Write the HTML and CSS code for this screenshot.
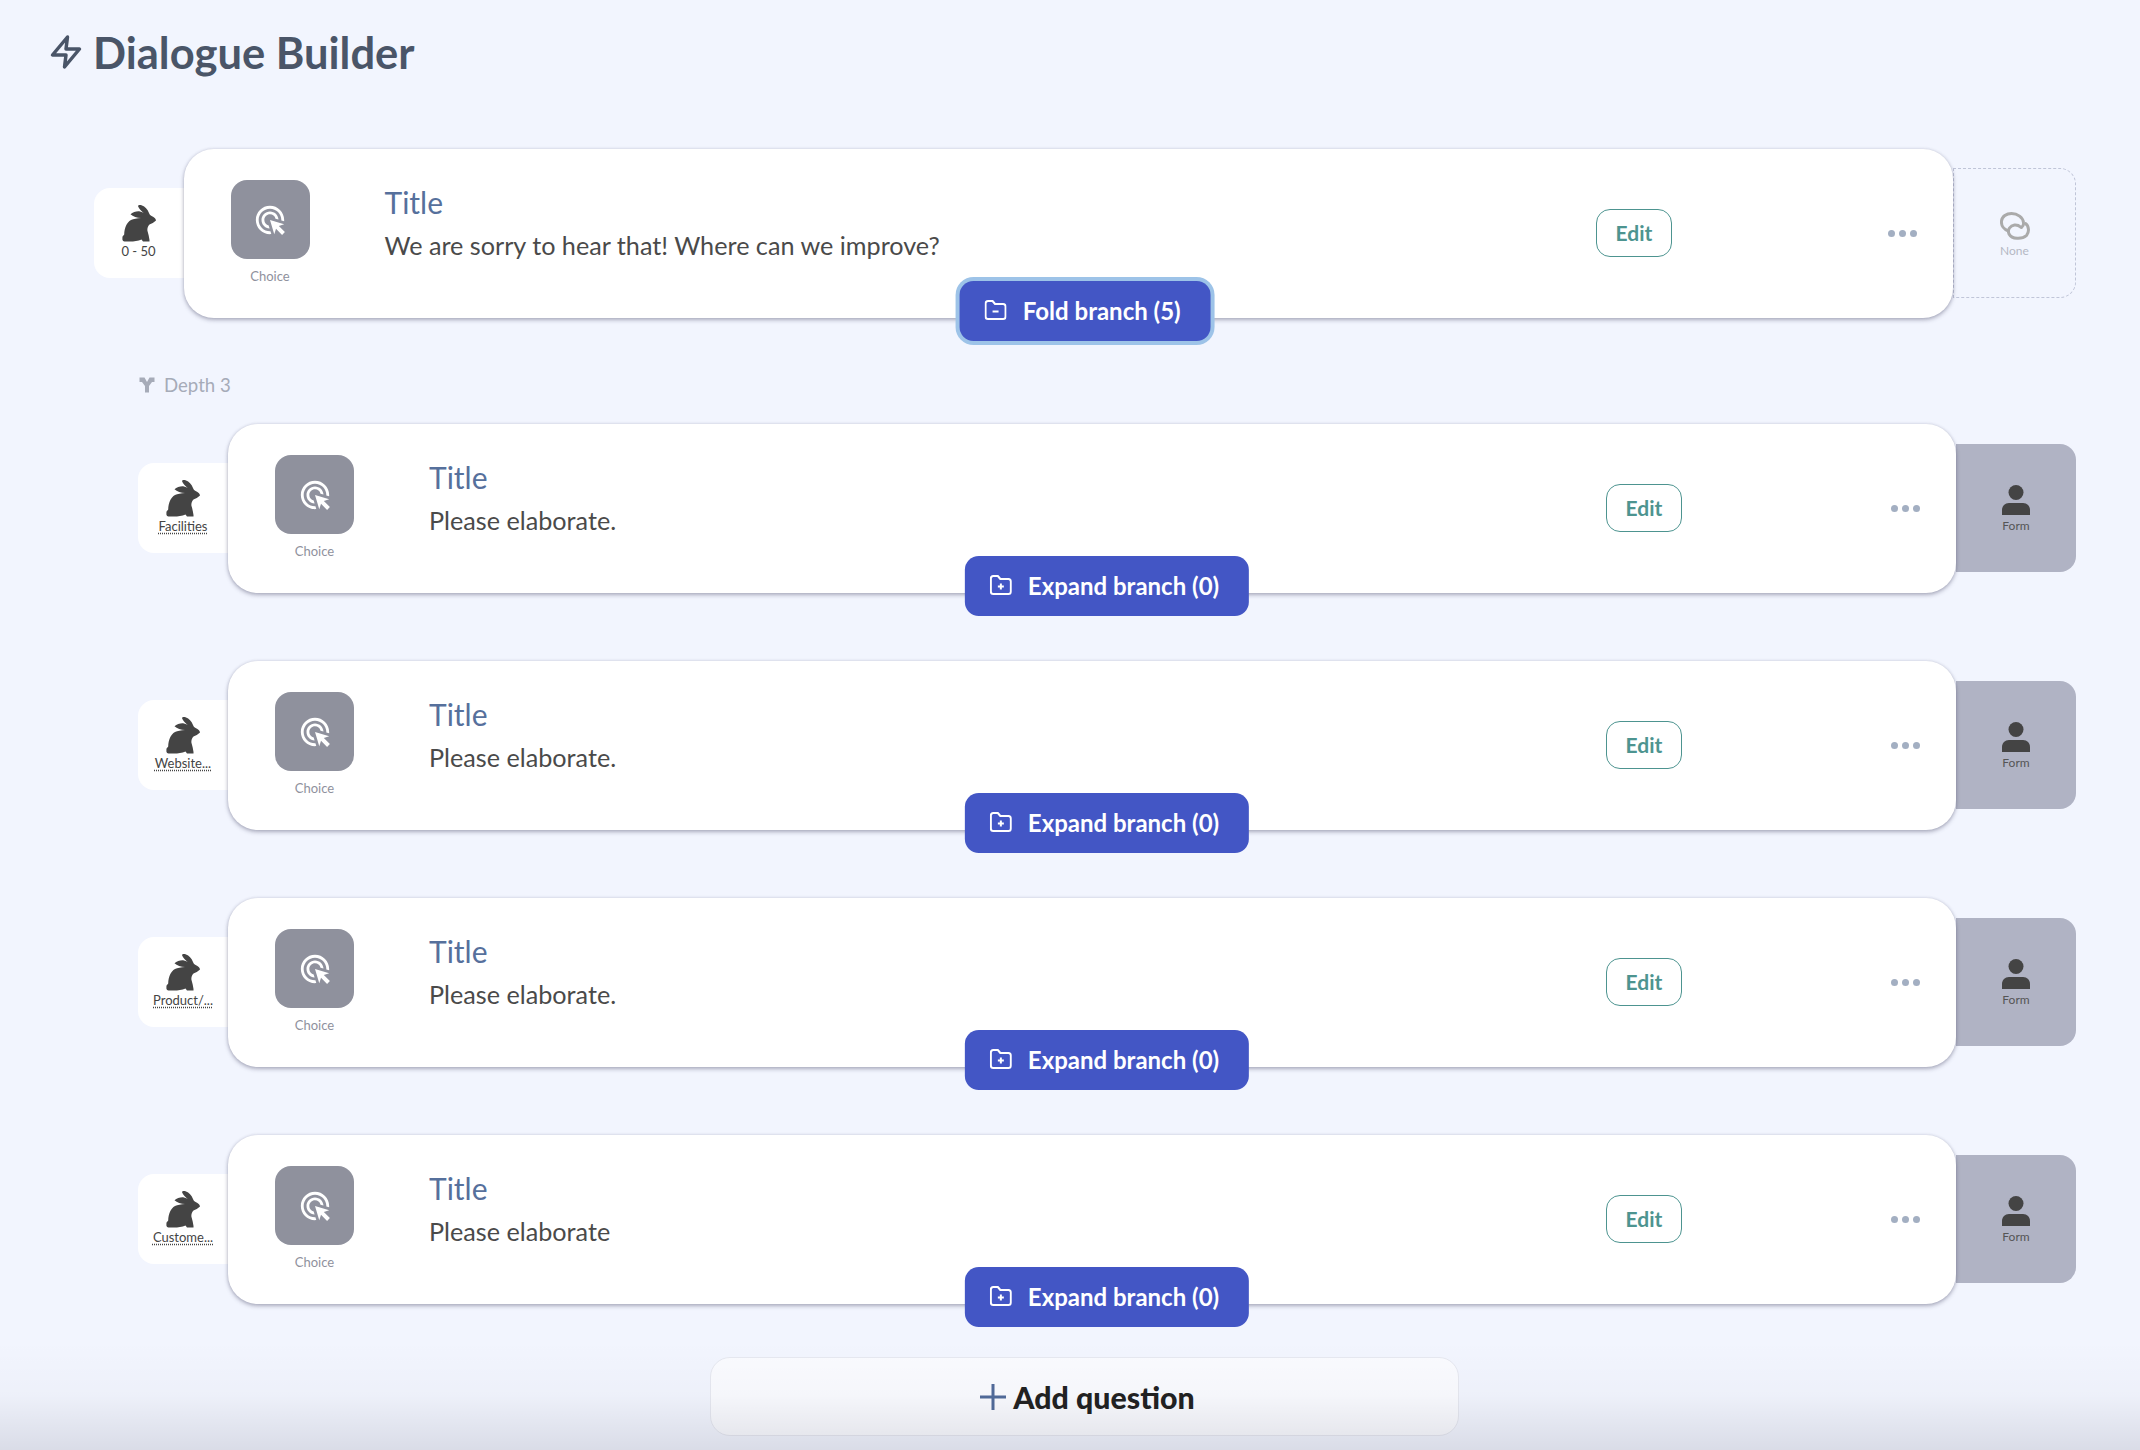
FILE: index.html
```html
<!DOCTYPE html>
<html lang="en">
<head>
    <meta charset="UTF-8">
    <meta name="viewport" content="width=device-width, initial-scale=1.0">
    <title>Dialogue Builder</title>
    <link rel="stylesheet" href="styles.css">
</head>
<body>
    <svg class="icon-defs" width="0" height="0">
        <defs>
            <path id="rabbit" d="M0.5 33C0 31.500 1.500 30.500 2.200 29.500C2.500 23 4.500 17.500 9 15C11.500 13.800 15 13.300 19 13C15 13 11 11.500 8.500 9.300C11 7 15 6 18 6.500C19.500 6.800 21 7.500 22.500 8.500C19.500 6.500 16.500 3 16 1C16.500 -0.200 18.500 -0.200 20 0.500C23 1.500 25.500 4 27 8C27.500 10 29 10.800 31 11.800C32.500 12.500 33.800 14 34 15.500C32 17.500 29.500 18.500 27.500 19.500C26 21 25 23.500 25.500 26C26.500 29 27 32 27.500 35L27.500 36.500L21 36.500L19.500 34.500C16 36 12 36.500 8 36.500L2.500 36.500C1 36.500 0 35 0.500 33Z"/>
            <path id="click" d="M11.71 17.99C8.53 17.84 6 15.22 6 12c0-3.31 2.69-6 6-6 3.22 0 5.84 2.53 5.99 5.71l-2.1-.63C15.48 9.31 13.89 8 12 8c-2.21 0-4 1.79-4 4 0 1.89 1.31 3.48 3.08 3.89l.63 2.1zM22 12c0 .3-.01.6-.04.9l-1.97-.59c.01-.1.01-.21.01-.31 0-4.42-3.58-8-8-8s-8 3.58-8 8 3.58 8 8 8c.1 0 .21 0 .31-.01l.59 1.97c-.3.03-.6.04-.9.04-5.52 0-10-4.48-10-10S6.48 2 12 2s10 4.48 10 10zm-3.77 4.26L22 15l-10-3 3 10 1.26-3.77 4.27 4.27 1.98-1.98-4.28-4.26z"/>
            <path id="folder" d="M1 3.500C1 2.100 2.100 1 3.500 1H8L10.500 4H18.500C19.900 4 21 5.100 21 6.500V16.500C21 17.900 19.900 19 18.500 19H3.500C2.100 19 1 17.900 1 16.500Z"/>
        </defs>
    </svg>

    <h1 class="page-title">
        <svg class="bolt" viewBox="0 0 24 24"><polygon points="13 2 3 14 12 14 11 22 21 10 12 10 13 2"/></svg>
        Dialogue Builder
    </h1>

    <div class="row row-top">
        <div class="tab-left">
            <svg class="rabbit" viewBox="0 0 34 37"><use href="#rabbit"/></svg>
            <span class="tab-label-plain">0 - 50</span>
        </div>
        <div class="card">
            <div class="type-col">
                <div class="type-icon"><svg viewBox="0 0 24 24"><use href="#click"/></svg></div>
                <span class="type-label">Choice</span>
            </div>
            <div class="card-text">
                <div class="card-title">Title</div>
                <div class="card-body">We are sorry to hear that! Where can we improve?</div>
            </div>
            <button class="edit-btn">Edit</button>
            <div class="dots"><i></i><i></i><i></i></div>
            <button class="branch-btn branch-active">
                <svg class="folder" viewBox="0 0 22 20"><use href="#folder"/><path d="M8 11.500H14"/></svg>
                Fold branch (5)
            </button>
        </div>
        <div class="tab-right tab-none">
            <svg class="link" viewBox="0 0 30 28"><path d="M8.500 19C4 17.500 1 13.500 1.500 9C2 4.500 6.500 1.500 11.500 1.500C17.500 1.500 23 5.500 23.500 10.500C23.800 12.500 23 14.500 21.500 15.500"/><path d="M25.500 11.500C29 14 29.500 20 26.500 23.500C22 27.500 12 27.500 9 22C7 17.500 10.500 13.500 14.500 13C17 12.800 19 13.500 20.500 15"/></svg>
            <span>None</span>
        </div>
    </div>

    <div class="depth">
        <svg viewBox="0 0 16 16"><path d="M0.500 0.500H5.500L8 5L10.500 0.500H15.500V5H13L10 9V15.500H6V9L3 5H0.500Z"/></svg>
        Depth 3
    </div>

    <div class="row">
        <div class="tab-left">
            <svg class="rabbit" viewBox="0 0 34 37"><use href="#rabbit"/></svg>
            <span class="tab-label">Facilities</span>
        </div>
        <div class="card">
            <div class="type-col">
                <div class="type-icon"><svg viewBox="0 0 24 24"><use href="#click"/></svg></div>
                <span class="type-label">Choice</span>
            </div>
            <div class="card-text">
                <div class="card-title">Title</div>
                <div class="card-body">Please elaborate.</div>
            </div>
            <button class="edit-btn">Edit</button>
            <div class="dots"><i></i><i></i><i></i></div>
            <button class="branch-btn">
                <svg class="folder" viewBox="0 0 22 20"><use href="#folder"/><path d="M8 11.500H14M11 8.500V14.500"/></svg>
                Expand branch (0)
            </button>
        </div>
        <div class="tab-right">
            <svg class="person" viewBox="0 0 28 30"><circle cx="14" cy="7.500" r="7.500"/><path d="M0 30V25C0 21 3 18 7 18H21C25 18 28 21 28 25V30Z"/></svg>
            <span>Form</span>
        </div>
    </div>

    <div class="row">
        <div class="tab-left">
            <svg class="rabbit" viewBox="0 0 34 37"><use href="#rabbit"/></svg>
            <span class="tab-label">Website...</span>
        </div>
        <div class="card">
            <div class="type-col">
                <div class="type-icon"><svg viewBox="0 0 24 24"><use href="#click"/></svg></div>
                <span class="type-label">Choice</span>
            </div>
            <div class="card-text">
                <div class="card-title">Title</div>
                <div class="card-body">Please elaborate.</div>
            </div>
            <button class="edit-btn">Edit</button>
            <div class="dots"><i></i><i></i><i></i></div>
            <button class="branch-btn">
                <svg class="folder" viewBox="0 0 22 20"><use href="#folder"/><path d="M8 11.500H14M11 8.500V14.500"/></svg>
                Expand branch (0)
            </button>
        </div>
        <div class="tab-right">
            <svg class="person" viewBox="0 0 28 30"><circle cx="14" cy="7.500" r="7.500"/><path d="M0 30V25C0 21 3 18 7 18H21C25 18 28 21 28 25V30Z"/></svg>
            <span>Form</span>
        </div>
    </div>

    <div class="row">
        <div class="tab-left">
            <svg class="rabbit" viewBox="0 0 34 37"><use href="#rabbit"/></svg>
            <span class="tab-label">Product/...</span>
        </div>
        <div class="card">
            <div class="type-col">
                <div class="type-icon"><svg viewBox="0 0 24 24"><use href="#click"/></svg></div>
                <span class="type-label">Choice</span>
            </div>
            <div class="card-text">
                <div class="card-title">Title</div>
                <div class="card-body">Please elaborate.</div>
            </div>
            <button class="edit-btn">Edit</button>
            <div class="dots"><i></i><i></i><i></i></div>
            <button class="branch-btn">
                <svg class="folder" viewBox="0 0 22 20"><use href="#folder"/><path d="M8 11.500H14M11 8.500V14.500"/></svg>
                Expand branch (0)
            </button>
        </div>
        <div class="tab-right">
            <svg class="person" viewBox="0 0 28 30"><circle cx="14" cy="7.500" r="7.500"/><path d="M0 30V25C0 21 3 18 7 18H21C25 18 28 21 28 25V30Z"/></svg>
            <span>Form</span>
        </div>
    </div>

    <div class="row">
        <div class="tab-left">
            <svg class="rabbit" viewBox="0 0 34 37"><use href="#rabbit"/></svg>
            <span class="tab-label">Custome...</span>
        </div>
        <div class="card">
            <div class="type-col">
                <div class="type-icon"><svg viewBox="0 0 24 24"><use href="#click"/></svg></div>
                <span class="type-label">Choice</span>
            </div>
            <div class="card-text">
                <div class="card-title">Title</div>
                <div class="card-body">Please elaborate</div>
            </div>
            <button class="edit-btn">Edit</button>
            <div class="dots"><i></i><i></i><i></i></div>
            <button class="branch-btn">
                <svg class="folder" viewBox="0 0 22 20"><use href="#folder"/><path d="M8 11.500H14M11 8.500V14.500"/></svg>
                Expand branch (0)
            </button>
        </div>
        <div class="tab-right">
            <svg class="person" viewBox="0 0 28 30"><circle cx="14" cy="7.500" r="7.500"/><path d="M0 30V25C0 21 3 18 7 18H21C25 18 28 21 28 25V30Z"/></svg>
            <span>Form</span>
        </div>
    </div>

    <button class="add-question">
        <svg viewBox="0 0 26 26"><path d="M0 13H26M13 0V26"/></svg>
        Add question
    </button>

    <div class="bottom-fade"></div>
</body>
</html>
```

FILE: styles.css
```css
* {
    box-sizing: border-box;
}

body {
    margin: 0;
    height: 1450px;
    padding: 28px 64px 0 0;
    overflow: hidden;
    position: relative;
    background-color: #f2f5fe;
    font-family: Lato, 'Liberation Sans', sans-serif;
}

button {
    font-family: inherit;
    cursor: pointer;
}

.icon-defs {
    position: absolute;
}

.page-title {
    display: flex;
    align-items: center;
    gap: 9px;
    height: 48px;
    margin: 0 0 73px 48px;
    color: #4a5568;
    font-size: 43.5px;
    font-weight: 700;
}

.bolt {
    width: 36px;
    height: 38px;
    fill: none;
    stroke: #4a5568;
    stroke-width: 2.3;
    stroke-linejoin: round;
}

.row {
    display: flex;
    align-items: center;
    margin: 0 0 68px 138px;
}

.row-top {
    margin: 0 0 0 93.5px;
}

.tab-left {
    width: 90px;
    height: 90px;
    margin-bottom: 2px;
    flex-shrink: 0;
    display: flex;
    flex-direction: column;
    align-items: center;
    padding-top: 17px;
    background-color: #fff;
    border-radius: 16px 0 0 16px;
}

.rabbit {
    width: 34px;
    height: 37px;
    fill: #444;
}

.tab-label,
.tab-label-plain {
    margin-top: 1px;
    color: #444;
    font-size: 13px;
    line-height: 17px;
    white-space: nowrap;
}

.tab-label {
    text-decoration: underline dotted;
    text-underline-offset: 2px;
}

.card {
    position: relative;
    z-index: 1;
    flex: 1;
    height: 169px;
    display: flex;
    align-items: center;
    padding-left: 47px;
    background-color: #fff;
    border-radius: 30px;
    box-shadow: 0 2px 4px rgba(70, 70, 100, 0.4), 0 0 3px rgba(70, 70, 100, 0.15);
}

.type-col {
    width: 79px;
    align-self: flex-start;
    padding-top: 31px;
    text-align: center;
}

.type-icon {
    width: 79px;
    height: 79px;
    display: flex;
    justify-content: center;
    align-items: center;
    background-color: #8f919d;
    border-radius: 16px;
}

.type-icon svg {
    width: 34px;
    height: 34px;
    fill: #fff;
}

.type-label {
    display: block;
    margin-top: 9px;
    color: #8f919d;
    font-size: 13px;
    line-height: 16px;
}

.card-text {
    flex: 1;
    margin-left: 75px;
    align-self: flex-start;
    padding-top: 34px;
}

.card-title {
    color: #56709c;
    font-size: 30px;
    line-height: 38px;
}

.card-body {
    margin-top: 5px;
    color: #4a4a4a;
    font-size: 25.2px;
    line-height: 38px;
}

.edit-btn {
    width: 76px;
    height: 48px;
    margin-right: 209px;
    margin-bottom: 2px;
    padding: 0;
    background-color: #fff;
    border: 1px solid #4d9490;
    border-radius: 14px;
    color: #4d9490;
    font-size: 21px;
    font-weight: 700;
}

.dots {
    display: flex;
    gap: 4px;
    margin-right: 36px;
}

.dots i {
    width: 7px;
    height: 7px;
    background-color: #a3afc2;
    border-radius: 50%;
}

.row-top .edit-btn {
    margin-right: 216px;
}

.branch-btn {
    position: absolute;
    left: calc(50% + 15px);
    bottom: -23px;
    height: 60px;
    display: flex;
    align-items: center;
    gap: 16px;
    transform: translateX(-50%);
    padding: 0 30px 2px 25px;
    background-color: #4356c5;
    border: none;
    border-radius: 14px;
    color: #fff;
    font-size: 24px;
    font-weight: 700;
    white-space: nowrap;
}

.branch-active {
    left: calc(50% + 17px);
    box-shadow: 0 0 0 4px #9dc3e8;
}

.folder {
    width: 22px;
    height: 20px;
    fill: none;
    stroke: #fff;
    stroke-width: 2;
    stroke-linejoin: round;
}

.tab-right {
    width: 120px;
    height: 128px;
    margin-bottom: 2px;
    flex-shrink: 0;
    display: flex;
    flex-direction: column;
    align-items: center;
    padding-top: 41px;
    background-color: #b0b3c4;
    border-radius: 0 16px 16px 0;
    color: #555;
    font-size: 12px;
    line-height: 16px;
}

.tab-none {
    width: 123px;
    height: 130px;
    padding-top: 43px;
    background: none;
    border: 1px dashed #c0c5d8;
    color: #b5b8c4;
}

.person {
    width: 28px;
    height: 30px;
    margin-bottom: 3px;
    fill: #444;
}

.link {
    width: 30px;
    height: 28px;
    margin-bottom: 3px;
    fill: none;
    stroke: #aaa;
    stroke-width: 3;
    stroke-linecap: round;
}

.depth {
    display: flex;
    align-items: center;
    gap: 9px;
    height: 24px;
    margin: 55px 0 27px 139px;
    color: #a6abb8;
    font-size: 18.6px;
}

.depth svg {
    width: 16px;
    height: 16px;
    fill: #a6abb8;
}

.add-question {
    display: flex;
    justify-content: center;
    align-items: center;
    gap: 7px;
    width: 749px;
    height: 79px;
    margin: -15px 0 0 710px;
    padding-left: 12px;
    background-color: #fafbff;
    border: 1px solid #e6e8f0;
    border-radius: 20px;
    color: #222;
    font-size: 30.3px;
    font-weight: 900;
}

.add-question svg {
    width: 26px;
    height: 26px;
    fill: none;
    stroke: #516b9a;
    stroke-width: 3;
}

.bottom-fade {
    position: absolute;
    z-index: 2;
    left: 0;
    right: 0;
    bottom: 0;
    height: 110px;
    background: linear-gradient(rgba(0, 0, 30, 0), rgba(0, 0, 30, 0.02) 50%, rgba(0, 0, 30, 0.1));
    pointer-events: none;
}
```
